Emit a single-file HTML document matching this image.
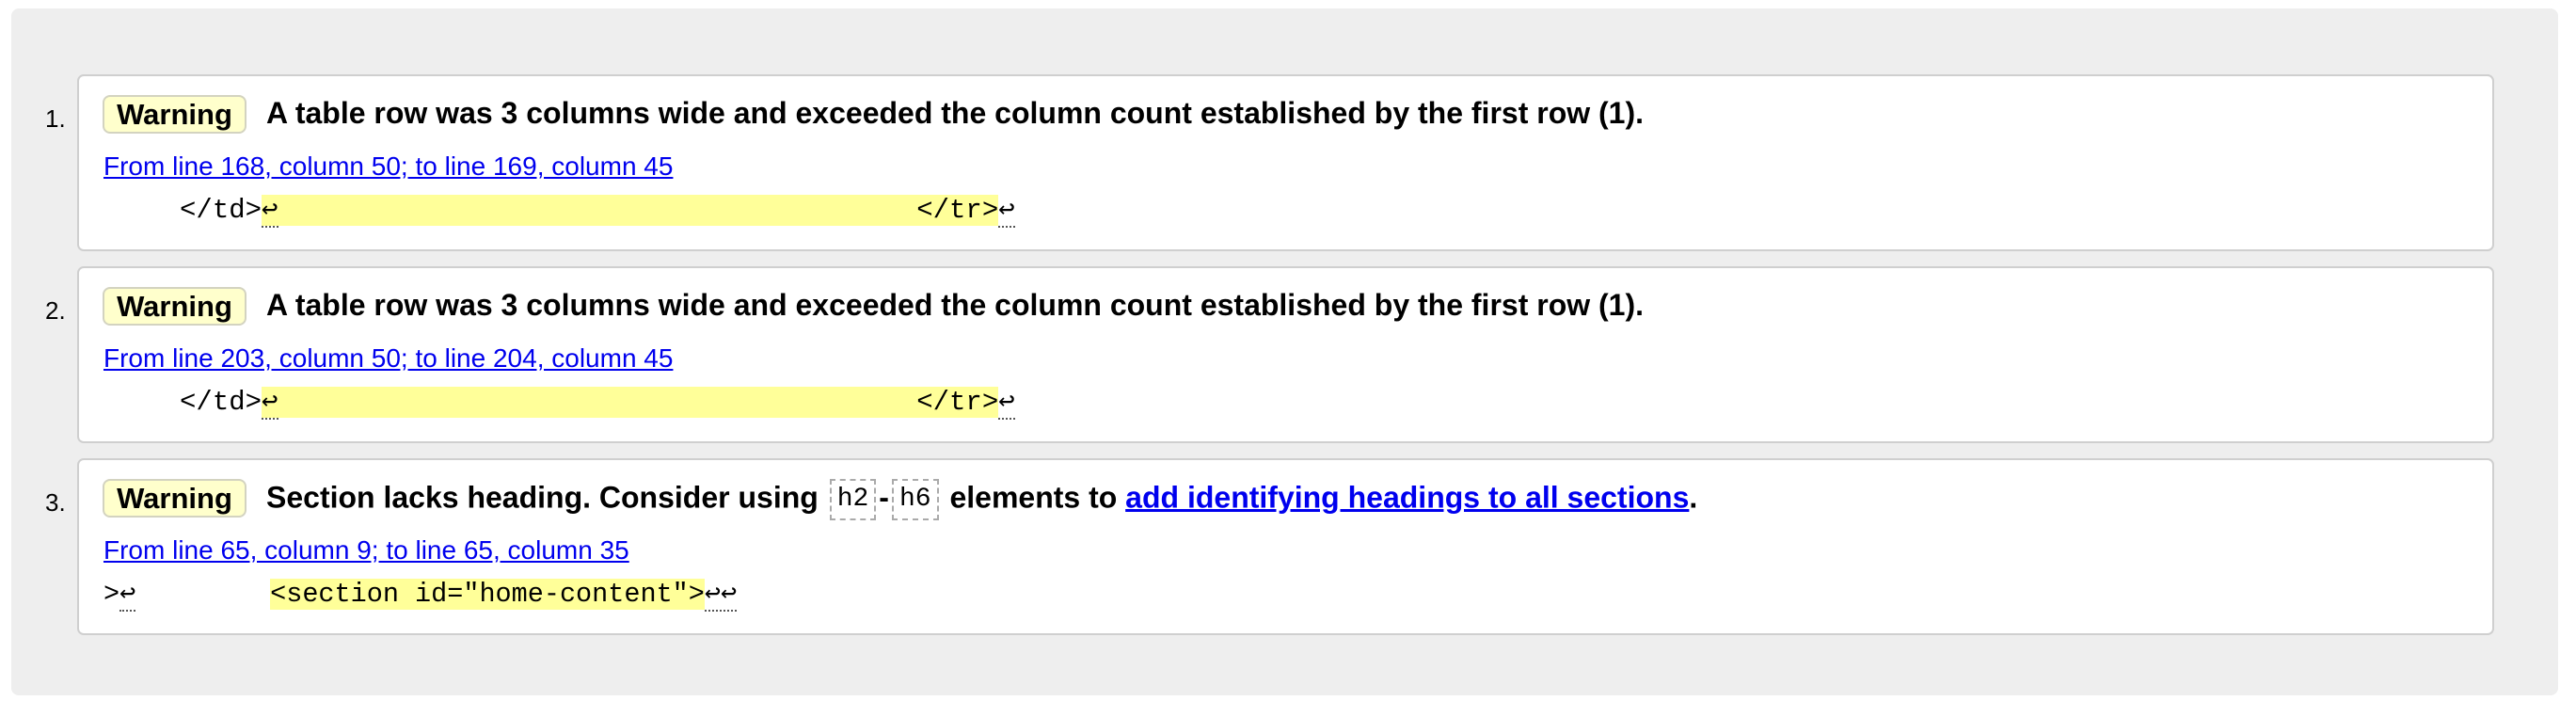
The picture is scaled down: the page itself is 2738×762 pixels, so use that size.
<!DOCTYPE html>
<html><head><meta charset="utf-8"><style>
html,body{margin:0;padding:0;background:#fff;width:2738px;height:762px;overflow:hidden;font-family:"Liberation Sans",Arial,sans-serif}
.outer{position:absolute;left:12px;top:9px;width:2707px;height:730px;background:#eeeeee;border-radius:8px}
.box{position:absolute;left:82px;width:2565px;height:184px;background:#fff;border:2px solid #cfcfcf;border-radius:7px}
.num{position:absolute;left:-36px;top:30px;font-size:26px;color:#000}
.badge{position:absolute;left:25px;top:20px;width:153px;height:41px;box-sizing:border-box;background:#ffffcc;border:2px solid #d3d3c0;border-radius:8px;font-weight:bold;font-size:31px;line-height:37px;text-align:center}
.title{position:absolute;left:199px;top:20px;font-weight:bold;font-size:32px;line-height:38px;white-space:nowrap}
.link{position:absolute;left:26px;top:80px;font-size:28px;color:#0000ee;text-decoration:underline;white-space:nowrap}
.code{position:absolute;left:20px;top:127px;font-family:"Liberation Mono",monospace;font-size:29px;line-height:32px;white-space:pre}
.hl{background:#ffff99}
.lf{border-bottom:2px dotted #555}
.tag{display:inline-block;font-family:"Liberation Mono",monospace;font-weight:normal;border:2px dashed #aaa;padding:4px 6px;line-height:32px;margin:0 3px;font-size:28px;vertical-align:middle}
.title a{color:#0000ee}
</style></head><body>
<div class="outer"></div>

<div class="box" style="top:79px">
<div class="num">1.</div>
<div class="badge">Warning</div>
<div class="title">A table row was 3 columns wide and exceeded the column count established by the first row (1).</div>
<div class="link">From line 168, column 50; to line 169, column 45</div>
<div class="code">     &lt;/td&gt;<span class="hl"><span class="lf">↩</span>                                       &lt;/tr&gt;</span><span class="lf">↩</span></div>
</div>

<div class="box" style="top:283px">
<div class="num">2.</div>
<div class="badge">Warning</div>
<div class="title">A table row was 3 columns wide and exceeded the column count established by the first row (1).</div>
<div class="link">From line 203, column 50; to line 204, column 45</div>
<div class="code">     &lt;/td&gt;<span class="hl"><span class="lf">↩</span>                                       &lt;/tr&gt;</span><span class="lf">↩</span></div>
</div>

<div class="box" style="top:487px">
<div class="num">3.</div>
<div class="badge">Warning</div>
<div class="title">Section lacks heading. Consider using <span class="tag">h2</span>-<span class="tag">h6</span> elements to <a href="#">add identifying headings to all sections</a>.</div>
<div class="link">From line 65, column 9; to line 65, column 35</div>
<div class="code" style="left:26px;font-size:28.5px">&gt;<span class="lf">↩</span>        <span class="hl" style="margin-left:6px">&lt;section id="home-content"&gt;</span><span class="lf">↩↩</span></div>
</div>
</body></html>
